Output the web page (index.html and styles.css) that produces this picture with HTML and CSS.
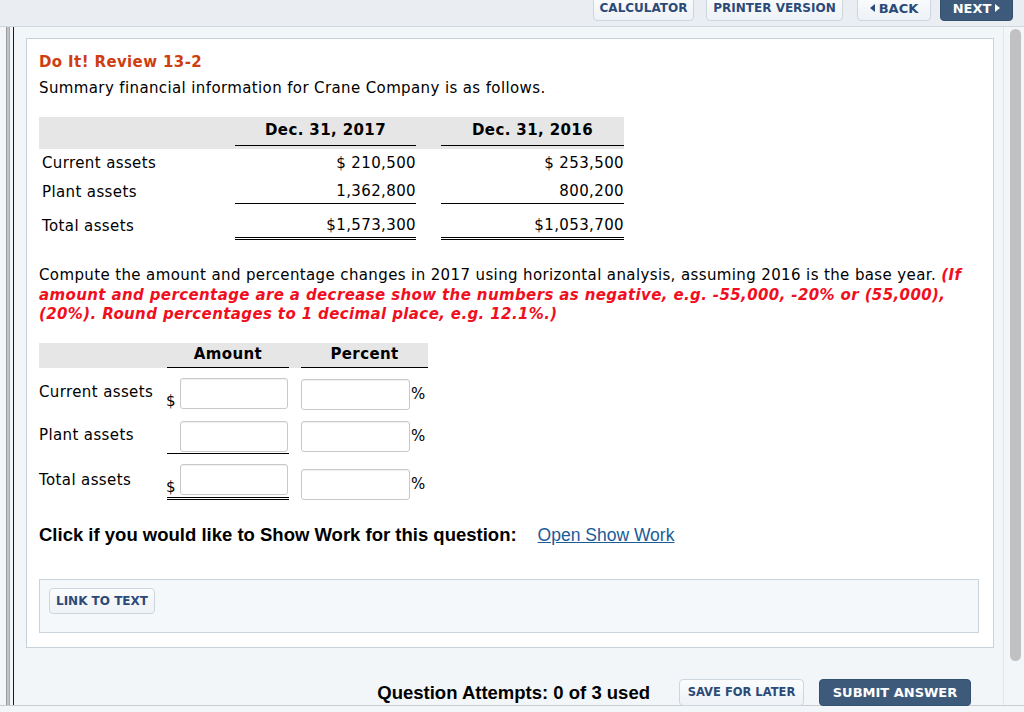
FILE: index.html
```html
<!DOCTYPE html>
<html>
<head>
<meta charset="utf-8">
<link rel="stylesheet" href="styles.css">
</head>
<body>
<div class="topbar">
  <a class="btn tb calc">CALCULATOR</a>
  <a class="btn tb print">PRINTER VERSION</a>
  <a class="btn tb back"><span class="tri-l"></span>BACK</a>
  <a class="btn tb dark next">NEXT<span class="tri-r"></span></a>
</div>
<div class="frame">
  <div class="leftstrip"><div class="grip"></div><div class="blackline"></div></div>
  <div class="main">
    <div class="panel">
      <h1 class="title">Do It! Review 13-2</h1>
      <p class="intro">Summary financial information for Crane Company is as follows.</p>
      <table class="fin">
        <thead>
          <tr>
            <th class="lbl"></th>
            <th class="col"><div class="hd">Dec. 31, 2017</div></th>
            <th class="gap"></th>
            <th class="col c2"><div class="hd">Dec. 31, 2016</div></th>
          </tr>
        </thead>
        <tbody>
          <tr class="r1">
            <td class="lbl">Current assets</td>
            <td class="num">$ 210,500</td>
            <td></td>
            <td class="num">$ 253,500</td>
          </tr>
          <tr class="r2">
            <td class="lbl">Plant assets</td>
            <td class="num"><div class="ul">1,362,800</div></td>
            <td></td>
            <td class="num"><div class="ul">800,200</div></td>
          </tr>
          <tr class="r3">
            <td class="lbl">Total assets</td>
            <td class="num"><div class="dul">$1,573,300</div></td>
            <td></td>
            <td class="num"><div class="dul">$1,053,700</div></td>
          </tr>
        </tbody>
      </table>

      <p class="question">Compute the amount and percentage changes in 2017 using horizontal analysis, assuming 2016 is the base year. <em class="hint">(If amount and percentage are a decrease show the numbers as negative, e.g. -55,000, -20% or (55,000), (20%). Round percentages to 1 decimal place, e.g. 12.1%.)</em></p>

      <table class="ans">
        <thead>
          <tr>
            <th class="albl"></th>
            <th class="acol"><div class="hd2">Amount</div></th>
            <th class="agap"></th>
            <th class="pcol"><div class="hd2">Percent</div></th>
          </tr>
        </thead>
        <tbody>
          <tr class="a1">
            <td class="albl">Current assets</td>
            <td class="acol"><div class="amt"><span class="cur">$</span><input class="inp" type="text"></div></td>
            <td></td>
            <td class="pcol"><div class="pct"><input class="inp pinp" type="text"><span class="pc">%</span></div></td>
          </tr>
          <tr class="a2">
            <td class="albl">Plant assets</td>
            <td class="acol"><div class="amt ul2"><span class="cur"></span><input class="inp" type="text"></div></td>
            <td></td>
            <td class="pcol"><div class="pct"><input class="inp pinp" type="text"><span class="pc">%</span></div></td>
          </tr>
          <tr class="a3">
            <td class="albl">Total assets</td>
            <td class="acol"><div class="amt dul2"><span class="cur">$</span><input class="inp" type="text"></div></td>
            <td></td>
            <td class="pcol"><div class="pct"><input class="inp pinp" type="text"><span class="pc">%</span></div></td>
          </tr>
        </tbody>
      </table>

      <p class="showwork">Click if you would like to Show Work for this question:<a class="swlink">Open Show Work</a></p>

      <div class="linkbox"><a class="btn small">LINK TO TEXT</a></div>
    </div>
    <div class="footer">
      <span class="attempts">Question Attempts: 0 of 3 used</span>
      <a class="btn fbtn save">SAVE FOR LATER</a>
      <a class="btn dark fbtn submit">SUBMIT ANSWER</a>
    </div>
  </div>
  <div class="scroll"><div class="thumb"></div></div>
</div>
</body>
</html>
```
FILE: styles.css
```css
* { box-sizing: border-box; }
html, body { margin: 0; padding: 0; }
body {
  width: 1024px;
  height: 712px;
  overflow: hidden;
  background: #f3f6f9;
  font-family: "DejaVu Sans", Verdana, sans-serif;
  letter-spacing: 0.38px;
  color: #000;
}
.topbar {
  height: 27px;
  background: #eaeef2;
  border-bottom: 1px solid #cfd8e1;
  display: flex;
  align-items: flex-start;
  padding-left: 593px;
}
.btn {
  display: inline-flex;
  align-items: center;
  justify-content: center;
  white-space: nowrap;
  font-family: "DejaVu Sans", Verdana, sans-serif;
  font-weight: bold;
  font-size: 12px;
  letter-spacing: 0;
  color: #2b4a78;
  background: linear-gradient(#fbfcfd, #eef2f6);
  border: 1px solid #cdd6df;
  border-radius: 4px;
  text-decoration: none;
}
.tb {
  height: 26px;
  margin-top: -5px;
  padding: 0;
}
.calc { width: 101px; }
.print { width: 137px; margin-left: 12px; }
.back { width: 74px; margin-left: 14px; font-size: 13px; }
.next { width: 73px; margin-left: 9px; font-size: 13px; }
.btn.dark {
  background: #3d5a7b;
  border-color: #34506f;
  color: #fff;
}
.tri-l {
  width: 0; height: 0;
  border-top: 4px solid transparent;
  border-bottom: 4px solid transparent;
  border-right: 5px solid #2b4a78;
  margin-right: 4px;
}
.tri-r {
  width: 0; height: 0;
  border-top: 4px solid transparent;
  border-bottom: 4px solid transparent;
  border-left: 5px solid #fff;
  margin-left: 4px;
}
.frame {
  display: flex;
  height: 679px;
  border-bottom: 1px solid #c9cdd1;
  position: relative;
}
.leftstrip {
  width: 14px;
  display: flex;
  padding-left: 6px;
  flex: none;
}
.grip {
  width: 4px;
  background: #c4c4c4;
  border-left: 1px solid #9a9a9a;
  border-right: 1px solid #a8a8a8;
}
.blackline {
  width: 2px;
  margin-left: 3px;
  background: #1a1a1a;
}
.main {
  width: 990px;
  padding: 11px 10px 0 12px;
  border-right: 1px solid #e1e6eb;
}
.panel {
  background: #fff;
  border: 1px solid #c6d1dc;
  width: 968px;
  padding: 13px 14px 14px 12px;
}
.title {
  margin: 0;
  font-size: 15px;
  font-weight: bold;
  color: #cf3e10;
  line-height: 20px;
}
.intro {
  margin: 6px 0 0;
  font-size: 15px;
  line-height: 20px;
}
.fin {
  margin-top: 19px;
  border-collapse: collapse;
  font-size: 15px;
}
.fin th, .fin td { padding: 0; }
.fin thead th {
  background: #e6e6e6;
  height: 32px;
  vertical-align: bottom;
}
.fin .lbl { width: 196px; text-align: left; padding-left: 3px; font-weight: normal; }
.fin .col { width: 181px; }
.fin .gap { width: 25px; }
.fin .c2 { width: 183px; }
.hd {
  border-bottom: 1px solid #000;
  padding-bottom: 6px;
  margin-bottom: 3px;
  line-height: 18px;
  text-align: center;
  font-weight: bold;
}
.fin td.num { text-align: right; }
.fin .r1 td { height: 28px; line-height: 28px; }
.fin .r2 td { height: 27px; vertical-align: bottom; line-height: 24px; }
.fin .r2 td.lbl { vertical-align: bottom; line-height: 24px; padding-bottom: 0; }
.ul { border-bottom: 1px solid #000; }
.fin .r3 td { padding-top: 9px; line-height: 24px; vertical-align: top; }
.fin .r3 td.lbl { padding-top: 10px; }
.dul { border-bottom: 3px double #000; }
.question {
  margin: 26px 0 0;
  font-size: 15px;
  line-height: 19.5px;
}
.hint {
  color: #f00f1e;
  font-weight: bold;
  font-style: italic;
}
.ans {
  margin-top: 18px;
  border-collapse: collapse;
  font-size: 15px;
}
.ans th, .ans td { padding: 0; }
.ans thead th {
  background: #e6e6e6;
  height: 25px;
  vertical-align: bottom;
}
.hd2 {
  border-bottom: 1px solid #000;
  line-height: 18px;
  padding-bottom: 4px;
  margin-bottom: 0;
  text-align: center;
  font-weight: bold;
}
.ans .albl { width: 128px; text-align: left; font-weight: normal; }
.ans .acol { width: 122px; }
.ans .agap { width: 12px; }
.ans .pcol { width: 127px; }
.amt { display: flex; align-items: flex-end; }
.cur { width: 13px; line-height: 16px; margin-left: -1px; margin-right: 1px; font-size: 15px; letter-spacing: 0; }
.inp {
  width: 108px;
  height: 31px;
  border: 1px solid #c9c9c9;
  border-radius: 3px;
  background: #fff;
  box-shadow: inset 0 1px 1px rgba(0,0,0,0.06);
  margin: 0;
  padding: 0;
  font-size: 14px;
}
.pct { display: flex; align-items: center; }
.pinp { width: 109px; height: 31px; }
.pc { margin-left: 1px; font-size: 15px; letter-spacing: 0; }
.ans .a1 td { padding-top: 10px; vertical-align: top; }
.ans .a1 .albl { padding-top: 15px; }
.ans .a2 td { padding-top: 11px; vertical-align: top; }
.ans .a2 .albl { padding-top: 16px; }
.ans .a3 td { padding-top: 10px; vertical-align: top; }
.ans .a3 .albl { padding-top: 17px; }
.ul2 { border-bottom: 1px solid #000; padding-bottom: 1px; }
.dul2 { border-bottom: 3px double #000; padding-bottom: 2px; }
.ans .a1 .pct { margin-top: 1px; }
.ans .a2 .pct { margin-top: 0; }
.ans .a3 .pct { margin-top: 5px; }
.showwork {
  margin: 24px 0 0;
  font-family: "Liberation Sans", Arial, sans-serif;
  font-weight: bold;
  font-size: 18.5px;
  letter-spacing: 0;
  line-height: 22px;
}
.swlink {
  font-weight: normal;
  font-size: 17.5px;
  color: #1b5b98;
  text-decoration: underline;
  margin-left: 21px;
}
.linkbox {
  margin-top: 33px;
  height: 54px;
  background: #f5f8fb;
  border: 1px solid #c9d4df;
  padding: 8px 9px;
}
.btn.small {
  width: 106px;
  height: 26px;
  font-size: 12px;
  padding-top: 1px;
}
.footer {
  display: flex;
  justify-content: flex-end;
  align-items: center;
  padding-right: 22px;
  margin-top: 31px;
}
.attempts {
  font-family: "Liberation Sans", Arial, sans-serif;
  font-weight: bold;
  font-size: 18.5px;
  letter-spacing: 0;
  margin-right: 29px;
  padding-top: 2px;
}
.fbtn {
  height: 27px;
  font-size: 11.5px;
}
.save { width: 125px; }
.submit { width: 152px; margin-left: 15px; font-size: 13px; }
.scroll {
  position: absolute;
  right: 0;
  top: 0;
  width: 19px;
  height: 100%;
}
.thumb {
  position: absolute;
  left: 5px;
  top: 2px;
  width: 11px;
  height: 632px;
  background: #c1c1c1;
  border-radius: 6px;
}
```
